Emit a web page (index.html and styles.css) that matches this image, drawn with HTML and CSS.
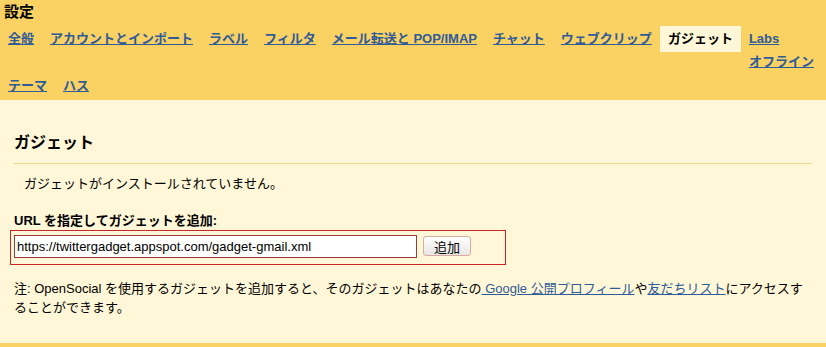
FILE: index.html
```html
<!DOCTYPE html>
<html lang="ja">
<head>
  <meta charset="UTF-8">
  <title>設定 - ガジェット</title>
  <link rel="stylesheet" href="styles.css">
</head>
<body>
  <div class="settings-header">
    <h1>設定</h1>
    <div class="tab-row">
      <a class="tab" href="#">全般</a>
      <a class="tab" href="#">アカウントとインポート</a>
      <a class="tab" href="#">ラベル</a>
      <a class="tab" href="#">フィルタ</a>
      <a class="tab" href="#">メール転送と POP/IMAP</a>
      <a class="tab" href="#">チャット</a>
      <a class="tab" href="#">ウェブクリップ</a>
      <span class="tab active">ガジェット</span>
      <div class="tab-stack">
        <a class="tab" href="#">Labs</a>
        <a class="tab sub" href="#">オフライン</a>
      </div>
    </div>
    <div class="tab-row">
      <a class="tab" href="#">テーマ</a>
      <a class="tab" href="#">ハス</a>
    </div>
  </div>

  <div class="panel">
    <h2>ガジェット</h2>
    <p class="empty">ガジェットがインストールされていません。</p>
    <label class="add-label" for="gadget-url">URL を指定してガジェットを追加:</label>
    <div class="add-box">
      <input id="gadget-url" type="text" value="https://twittergadget.appspot.com/gadget-gmail.xml">
      <button class="add-btn">追加</button>
    </div>
    <p class="note">注: OpenSocial を使用するガジェットを追加すると、そのガジェットはあなたの<a href="#"> Google 公開プロフィール</a>や<a href="#">友だちリスト</a>にアクセスすることができます。</p>
  </div>
</body>
</html>
```

FILE: styles.css
```css
* {
  margin: 0;
  padding: 0;
  box-sizing: border-box;
}

body {
  background: #fad163;
  color: #000;
  font-family: 'Liberation Sans', 'Noto Sans CJK JP', sans-serif;
  font-size: 13px;
}

.settings-header {
  height: 100px;
  padding-top: 3px;
}

.settings-header h1 {
  font-size: 15px;
  line-height: 18px;
  font-weight: bold;
  padding-left: 4px;
}

.tab-row {
  display: flex;
  align-items: flex-start;
}

.tab-row:first-of-type {
  margin-top: 5px;
}

.tab-row + .tab-row {
  margin-top: 1px;
}

.tab {
  display: block;
  padding: 0 8px;
  line-height: 26px;
  font-weight: bold;
  color: #2f5b98;
  text-decoration: underline;
  white-space: nowrap;
}

.tab.active {
  background: #fff7d7;
  color: #000;
  text-decoration: none;
}

.tab.sub {
  line-height: 20px;
}

.panel {
  background: #fff7d7;
  height: 243px;
  padding: 33px 14px 0 14px;
}

.panel h2 {
  font-size: 16px;
  line-height: 20px;
  font-weight: bold;
  padding-bottom: 10px;
  border-bottom: 1px solid #ecd68a;
}

.empty {
  line-height: 18px;
  margin-top: 11px;
  padding-left: 10px;
}

.add-label {
  display: block;
  font-weight: bold;
  line-height: 18px;
  margin-top: 19px;
}

.add-box {
  display: flex;
  align-items: flex-start;
  gap: 6px;
  width: 496px;
  height: 35px;
  margin-left: -4px;
  padding: 4px 3px;
  border: 1px solid #c8262a;
}

.add-box input {
  width: 403px;
  height: 23px;
  padding: 0 2px;
  border: 1px solid #9a3a3a;
  background: #fff;
  font-family: inherit;
  font-size: 13px;
  color: #000;
  outline: none;
}

.add-btn {
  width: 48px;
  height: 20px;
  margin-top: 1px;
  border: 1px solid #d9aaa0;
  border-radius: 3px;
  background: linear-gradient(#ffffff, #e9e7e4);
  font-family: inherit;
  font-size: 13px;
  color: #000;
}

.note {
  margin-top: 14px;
  line-height: 19px;
  width: 795px;
}

.note a {
  color: #2f5b98;
  text-decoration: underline;
}
```
